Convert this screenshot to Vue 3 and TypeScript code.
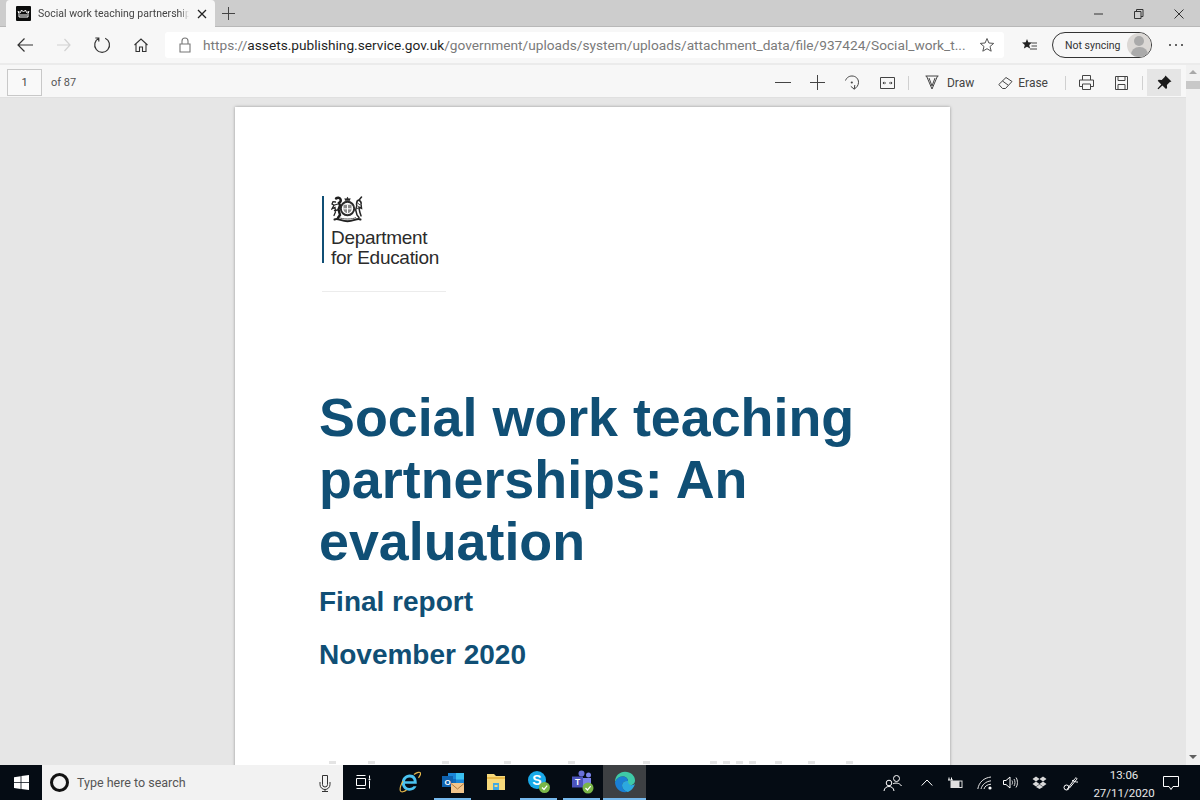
<template>
  <div class="screen">
    <header class="tabstrip">
      <div class="tab">
        <svg class="favicon" width="15" height="15" viewBox="0 0 15 15">
          <rect width="15" height="15" rx="1" fill="#0b0c0c" />
          <path d="M3 11V7.500L2 5.500l2.500 1L5.500 4 7.500 6 9.500 4l1 2.500 2.500-1L12 7.500V11Z" fill="none" stroke="#fff" stroke-width="1" />
          <path d="M4 9h7" stroke="#fff" stroke-width="1" />
        </svg>
        <span class="tab-title">Social work teaching partnership</span>
        <svg class="tab-close" width="10" height="10" viewBox="0 0 10 10">
          <path d="M1 1l8 8M9 1l-8 8" stroke="#222" stroke-width="1.300" />
        </svg>
      </div>
      <svg class="new-tab" width="13" height="13" viewBox="0 0 13 13">
        <path d="M6.500 0v13M0 6.500h13" stroke="#444" stroke-width="1" />
      </svg>
      <div class="window-controls">
        <svg width="12" height="12" viewBox="0 0 12 12"><path d="M1 6h9" stroke="#333" stroke-width="1" /></svg>
        <svg width="12" height="12" viewBox="0 0 12 12">
          <path d="M1.500 3.500h6.500v7H1.500zM3.500 3.500v-2h6.500v7H8" fill="none" stroke="#333" stroke-width="1" />
        </svg>
        <svg width="12" height="12" viewBox="0 0 12 12"><path d="M1.500 1.500l9 9M10.500 1.500l-9 9" stroke="#333" stroke-width="1" /></svg>
      </div>
    </header>

    <nav class="toolbar">
      <div class="nav-button">
        <svg width="18" height="16" viewBox="0 0 18 16"><path d="M17 8H2M8.500 1.500 2 8l6.500 6.500" fill="none" stroke="#333" stroke-width="1.200" /></svg>
      </div>
      <div class="nav-button">
        <svg width="18" height="16" viewBox="0 0 18 16"><path d="M2 8h13M9.500 2 15 8l-5.500 6" fill="none" stroke="#d2d2d2" stroke-width="1.200" /></svg>
      </div>
      <div class="nav-button">
        <svg width="18" height="18" viewBox="0 0 18 18"><path d="M6 2.200a7.400 7.400 0 1 0 6.200 0M5.800 5.500V2H2.300" fill="none" stroke="#333" stroke-width="1.200" /></svg>
      </div>
      <div class="nav-button">
        <svg width="16" height="16" viewBox="0 0 16 16"><path d="M1.500 8 8 2l6.500 6M3 7v7.500h3.500V10h3v4.500H13V7" fill="none" stroke="#333" stroke-width="1.100" /></svg>
      </div>
      <div class="address">
        <svg class="lock" width="12" height="16" viewBox="0 0 12 16">
          <path d="M1 7h10v8H1zM3 7V4a3 3 0 0 1 6 0v3" fill="none" stroke="#777" stroke-width="1.100" />
        </svg>
        <span class="url"><span class="url-dim">https://</span>assets.publishing.service.gov.uk<span class="url-dim">/government/uploads/system/uploads/attachment_data/file/937424/Social_work_t...</span></span>
        <svg class="star" width="16" height="16" viewBox="0 0 16 16">
          <path d="M8 1.500 9.900 6l4.800.4-3.700 3.100 1.200 4.700L8 11.700l-4.200 2.500L5 9.500 1.300 6.400 6.100 6Z" fill="none" stroke="#555" stroke-width="1" />
        </svg>
      </div>
      <svg class="collections" width="15" height="14" viewBox="0 0 15 14">
        <path d="M5 1 6.300 4.300 10 4.600 7.200 7l.9 3.600L5 8.700 1.900 10.600 2.800 7 0 4.600l3.700-.3Z" fill="#222" />
        <path d="M9.500 5H15M9.500 8H15M8 11h7" stroke="#444" stroke-width="1" />
      </svg>
      <div class="profile">
        <span>Not syncing</span>
        <span class="avatar"><span class="avatar-head"></span><span class="avatar-body"></span></span>
      </div>
      <div class="more"><i></i><i></i><i></i></div>
    </nav>

    <div class="workspace">
      <div class="viewer-column">
        <div class="pdfbar">
          <div class="page-box">1</div>
          <span class="page-count">of 87</span>
          <div class="pdf-tools">
            <svg class="t-minus" width="16" height="3" viewBox="0 0 16 3"><path d="M0 1.500h16" stroke="#444" stroke-width="1" /></svg>
            <svg class="t-plus" width="15" height="15" viewBox="0 0 15 15"><path d="M7.500 0v15M0 7.500h15" stroke="#444" stroke-width="1" /></svg>
            <svg class="t-rotate" width="16" height="16" viewBox="0 0 16 16">
              <path d="M1.500 5.500C3 2 5.500 1 8 1c3.800 0 6.500 2.800 6.500 6.300 0 2.900-1.700 5.300-4.300 6.700M6.800 11.300l3.400 2.900.6-4.200" fill="none" stroke="#444" stroke-width="1" />
              <circle cx="7.800" cy="7.500" r="1.100" fill="#444" />
            </svg>
            <svg class="t-fit" width="15" height="12" viewBox="0 0 15 12">
              <path d="M.5 .5h14v11H.5z" fill="none" stroke="#444" stroke-width="1" />
              <path d="M3 6h3M9 6h3M4 4.800 3 6l1 1.200M11 4.800 12 6l-1 1.200" fill="none" stroke="#444" stroke-width="1" />
            </svg>
            <i class="sep sep-a"></i>
            <div class="tool-label t-draw">
              <svg width="14" height="15" viewBox="0 0 14 15"><path d="M.5 1h13M1.500 1 7 14l5.500-13M4 3l3 8 3-8" fill="none" stroke="#444" stroke-width="1" /></svg>
              <span>Draw</span>
            </div>
            <div class="tool-label t-erase">
              <svg width="15" height="14" viewBox="0 0 15 14"><path d="M.8 8.500 8 1.500l6 4-6.500 7H4.500ZM4.500 5l5.500 4" fill="none" stroke="#444" stroke-width="1" /></svg>
              <span>Erase</span>
            </div>
            <i class="sep sep-b"></i>
            <svg class="t-print" width="15" height="15" viewBox="0 0 15 15">
              <path d="M3.500 5V.5h8V5M3.500 11.500H.5V5h14v6.500h-3M3.500 9h8v5.500h-8z" fill="none" stroke="#444" stroke-width="1" />
            </svg>
            <svg class="t-save" width="13" height="14" viewBox="0 0 13 14">
              <path d="M.5 .5h12v13H.5zM3 .5v4h7v-4M3 13.500V8.500h7v5" fill="none" stroke="#444" stroke-width="1" />
            </svg>
            <i class="sep sep-c"></i>
            <div class="pin-button">
              <svg width="16" height="16" viewBox="0 0 16 16">
                <path d="M9.500 .5 15.500 6.500l-1.600.6-3 3 .2 3-1.100 1-3.600-3.600-4 3.800-.9-.9 3.800-4L1.700 5.800l1-1.100 3 .2 3-3Z" fill="#1a1a1a" />
              </svg>
            </div>
          </div>
        </div>

        <main class="viewer">
          <article class="sheet">
            <div class="brand">
              <i class="brand-bar"></i>
              <div class="brand-body">
                <svg class="crest" width="33" height="28" viewBox="0 0 33 28">
                  <!-- crown -->
                  <path d="M14 4.800 13.500 2l1.700.8L16.500 .8l1.300 2 1.700-.8-.5 2.800Z" fill="#2a2a2a" />
                  <!-- garter ring and shield -->
                  <circle cx="16.500" cy="12.500" r="6.700" fill="none" stroke="#2b2b2b" stroke-width="2" />
                  <path d="M12.500 8.800h8v4.500c0 2.200-2 3.500-4 4.200-2-.7-4-2-4-4.200Z" fill="#8a8a8a" />
                  <path d="M16.500 8.800v8.700M12.500 12.800h8" stroke="#fff" stroke-width="1" />
                  <!-- lion -->
                  <path d="M5 2.500c1.500-1.300 3.700-1 4.500.7.700 1.700-.3 3-1.500 3.600L9 9.500l-1.500 3.800L9 19l-2 2.800" fill="none" stroke="#1d1d1d" stroke-width="2.400" stroke-linecap="round" />
                  <path d="M4.500 6 2 5.700 1 8l2 1.300L1 12.800l3-1.300.5 4.500-1.500 3.500M7 8 3.500 9M6.500 14l-3 .6" fill="none" stroke="#222" stroke-width="1.300" stroke-linecap="round" />
                  <!-- unicorn -->
                  <path d="M30.500 1 27.700 4.500M27.500 4c1.700.7 2.700 2 2.700 3.500M26.500 4.500c-1 1.700-1.200 3.500-.7 5.300L24.700 14l1.300 5 2 2.500M30 8l.5 4.300-2.500-1 .7 4.500 1.300 4" fill="none" stroke="#262626" stroke-width="1.500" stroke-linecap="round" />
                  <path d="M26 6.500 29 9M25.500 12l3.300 1.200" fill="none" stroke="#444" stroke-width="1" />
                  <!-- motto scroll -->
                  <path d="M3.500 23.500c3.500-1.700 6.500 1.700 13 1.700s9.500-3.400 13-1.700" fill="none" stroke="#222" stroke-width="2" stroke-linecap="round" />
                  <path d="M8 21.500c2 1 4.500 1.500 8.500 1.500s6.500-.5 8.500-1.500" fill="none" stroke="#555" stroke-width="1" />
                </svg>
                <p class="brand-name">Department<br />for Education</p>
              </div>
            </div>
            <hr class="rule" />
            <h1 class="title">Social work teaching partnerships: An evaluation</h1>
            <h2 class="subtitle">Final report</h2>
            <h2 class="date">November 2020</h2>
            <svg class="cut-line" width="560" height="3" viewBox="0 0 560 3">
              <rect v-for="x in cutMarks" :key="x" :x="x" y="0" width="7" height="3" fill="#e4e4e4" />
            </svg>
          </article>
        </main>
      </div>

      <aside class="scrollbar">
        <svg width="14" height="16" viewBox="0 0 14 16"><path d="M7 5l4 4H3Z" fill="#a8a8a8" /></svg>
        <i class="thumb"></i>
        <svg class="scroll-down" width="14" height="16" viewBox="0 0 14 16"><path d="M3 6h8l-4 4Z" fill="#606060" /></svg>
      </aside>
    </div>

    <footer class="taskbar">
      <div class="start">
        <svg width="15" height="15" viewBox="0 0 15 15">
          <path d="M0 2.200 6.600 1.200v6H0ZM7.400 1.100 15 0v7.200H7.400ZM0 8h6.600v6L0 13ZM7.400 8H15v7l-7.600-1.100Z" fill="#fff" />
        </svg>
      </div>
      <div class="search">
        <i class="cortana"></i>
        <span class="search-text">Type here to search</span>
        <svg class="mic" width="12" height="18" viewBox="0 0 12 18">
          <path d="M3.500 1.500h5v9a2.500 2.500 0 0 1-5 0ZM1 8v2.500a5 5 0 0 0 10 0V8M6 15.500V17.500M3 17.500h6" fill="none" stroke="#333" stroke-width="1" />
        </svg>
      </div>

      <div class="slot task-view">
        <svg width="16" height="14" viewBox="0 0 16 14">
          <path d="M.5 .5h9M.5 13.500h9M.5 3.500h9v7h-9zM13.500 .5v3M13.500 6v7.500" fill="none" stroke="#fff" stroke-width="1" />
          <circle cx="13.500" cy="4.500" r="1" fill="#fff" />
        </svg>
      </div>
      <div class="slot">
        <svg width="22" height="22" viewBox="0 0 22 22">
          <path d="M17.800 12.800h-12c.3 2.600 2 4.200 4.800 4.200 1.700 0 3-.6 3.800-1.700h3.100C16.400 18 14 19.700 10.500 19.700 6 19.700 2.800 16.500 2.800 11.800S6.200 3.500 10.700 3.500c4.700 0 7.300 3.300 7.100 9.300ZM5.900 10.300h8.900c-.2-2.400-1.700-3.900-4.200-3.900s-4.300 1.500-4.700 3.900Z" fill="#4bc4f2" />
          <path d="M15 3.500C18 1 21 .8 21.500 2c.4 1.200-.6 3-2 4.800M4 10C1.800 14 .5 18 1.500 20c.8 1.300 3.500 1 6-1" fill="none" stroke="#e5b84a" stroke-width="1.200" />
        </svg>
      </div>
      <div class="slot running">
        <svg width="24" height="24" viewBox="0 0 24 24">
          <rect x="7" y="3" width="16" height="13" fill="#1a86d8" />
          <rect x="15" y="3" width="8" height="6.500" fill="#3bc0f0" />
          <rect x="7" y="9" width="8" height="7" fill="#0f6cbd" />
          <rect x="1" y="6" width="11" height="11" fill="#0f62ae" />
          <text x="6.500" y="15" text-anchor="middle" font-size="8" font-weight="700" font-family="Liberation Sans, sans-serif" fill="#fff">O</text>
          <rect x="10" y="13" width="13" height="10" fill="#f3c58c" />
          <path d="M10 13.500 16.500 19 23 13.500" fill="none" stroke="#b17c3e" stroke-width="1" />
        </svg>
      </div>
      <div class="slot">
        <svg width="20" height="18" viewBox="0 0 20 18">
          <path d="M1 1h7l2 2h9v14H1Z" fill="#f7d97b" />
          <path d="M1 4h18v2H1Z" fill="#e9b949" />
          <path d="M7 10h6v7H7Z" fill="#3fa9e6" />
          <path d="M8.500 12h3v2h-3Z" fill="#f7d97b" />
        </svg>
      </div>
      <div class="slot running">
        <svg width="24" height="24" viewBox="0 0 24 24">
          <circle cx="10" cy="10" r="9" fill="#19a9e8" />
          <text x="10" y="15" text-anchor="middle" font-size="14" font-weight="700" font-family="Liberation Sans, sans-serif" fill="#fff">S</text>
          <circle cx="17.500" cy="17.500" r="5.500" fill="#7ab648" />
          <path d="M15 17.500l2 2 3.200-3.800" fill="none" stroke="#fff" stroke-width="1.200" />
        </svg>
      </div>
      <div class="slot running">
        <svg width="24" height="24" viewBox="0 0 24 24">
          <circle cx="18.500" cy="5" r="2.500" fill="#7b83eb" />
          <circle cx="11.500" cy="3.500" r="3" fill="#6a70d8" />
          <path d="M13 8h8v6c0 2-1.500 3-4 3h-4Z" fill="#7b83eb" />
          <rect x="2" y="6.500" width="11" height="11" fill="#4b53bc" />
          <text x="7.500" y="15" text-anchor="middle" font-size="8.500" font-weight="700" font-family="Liberation Sans, sans-serif" fill="#fff">T</text>
          <circle cx="18" cy="18" r="5.500" fill="#7ab648" />
          <path d="M15.500 18l2 2 3.200-3.800" fill="none" stroke="#fff" stroke-width="1.200" />
        </svg>
      </div>
      <div class="slot active">
        <svg width="22" height="22" viewBox="0 0 22 22">
          <path d="M1 11C1 5 5.500 .8 11 .8c5.800 0 10 4 10 8.700 0 3-2.400 4.700-5 4.700-1.700 0-3-.6-3.500-1.400 1-.7 1.500-1.700 1.500-2.800 0-2.500-2.300-4.500-5.300-4.500S3 7 1 11Z" fill="#3ec9a7" />
          <path d="M1 11c1.800-3.500 4-5.500 7.700-5.500 3 0 5.300 2 5.300 4.500-3.700-.5-6 1.500-6 4.500 0 2.600 2 5 5.500 6.500C12 21 11.500 21.200 11 21.200 5.500 21.200 1 16.800 1 11Z" fill="#1a7fd4" />
          <path d="M21 12.500c-1 4.500-4.500 8-7.500 8.500-3.500-1.500-5.500-3.900-5.500-6.500 0-3 2.300-5 6-4.500 0 1.500 1 4.200 3.500 4.200 1.500 0 3-.7 3.500-1.700Z" fill="#2ca9e0" />
        </svg>
      </div>

      <div class="tray">
        <svg class="i-people" width="20" height="18" viewBox="0 0 20 18">
          <circle cx="6" cy="9" r="2.800" fill="none" stroke="#fff" stroke-width="1" />
          <path d="M1 17c.3-3 2.500-4.500 5-4.500S10.700 14 11 17" fill="none" stroke="#fff" stroke-width="1" />
          <circle cx="13.500" cy="4.500" r="3" fill="none" stroke="#fff" stroke-width="1" />
          <path d="M10 9.800c2-1.200 6.500-1.200 8.500 2.200" fill="none" stroke="#fff" stroke-width="1" />
        </svg>
        <svg class="i-chevron" width="12" height="7" viewBox="0 0 12 7"><path d="M.7 6.500 6 1l5.300 5.500" fill="none" stroke="#fff" stroke-width="1" /></svg>
        <svg class="i-battery" width="15" height="12" viewBox="0 0 15 12">
          <path d="M1 .5V3M3.500 .5V3M0 3h5" stroke="#fff" stroke-width="1" />
          <rect x="2.500" y="3.500" width="12" height="7.500" fill="#e0e0e0" />
          <path d="M11.500 4.500h2v5.500h-2z" fill="#050c14" />
        </svg>
        <svg class="i-wifi" width="16" height="14" viewBox="0 0 16 14">
          <path d="M.8 13C2 6 7 1.800 14 1M4 13C5 9 8.500 5.500 14 4.800M7 13c.6-2.500 3-4.500 7-4.800" fill="none" stroke="#e6e6e6" stroke-width="1" />
          <circle cx="13" cy="12" r="1.600" fill="#fff" />
        </svg>
        <svg class="i-volume" width="15" height="13" viewBox="0 0 15 13">
          <path d="M.5 4.500H3L7 1v11L3 8.500H.5Z" fill="none" stroke="#fff" stroke-width="1" />
          <path d="M9 4.500c.7 1.200.7 2.800 0 4M11 3c1.300 2 1.300 5 0 7M13 1.500c2 3 2 7 0 10" fill="none" stroke="#ddd" stroke-width="1" />
        </svg>
        <svg class="i-dropbox" width="15" height="13" viewBox="0 0 15 13">
          <path d="M4 .5.500 3 4 5.500 7.500 3ZM11 .5 7.500 3 11 5.500 14.500 3ZM4 5.500.5 8 4 10.500 7.500 8ZM11 5.500 7.500 8l3.500 2.500L14.500 8ZM4 11l3.500 2 3.500-2-3.500-2.500Z" fill="#d9d9d9" />
        </svg>
        <svg class="i-pen" width="16" height="16" viewBox="0 0 16 16">
          <circle cx="3.500" cy="12.500" r="2.500" fill="none" stroke="#fff" stroke-width="1" />
          <path d="M4 14.500 12 3.500c.9-1.200 2.200-.6 1.800.7L6.500 13M9 5.500c2 .5 4.500 2 6 1.500" fill="none" stroke="#fff" stroke-width="1" />
        </svg>
        <div class="clock">
          <span>13:06</span>
          <span>27/11/2020</span>
        </div>
        <svg class="i-action" width="16" height="16" viewBox="0 0 16 16">
          <path d="M.5 1.500h15v10h-5.500l-2 3-2-3H.5Z" fill="none" stroke="#fff" stroke-width="1" />
        </svg>
      </div>
    </footer>
  </div>
</template>

<script setup lang="ts">
// tops of the next (cut off) line of the pdf page, measured from the text's left edge
const cutMarks: number[] = [10, 49, 123, 185, 249, 324, 391, 404, 417, 430, 456, 489, 527]
</script>

<style>
html, body { margin: 0; background: #e6e6e6; }
</style>

<style scoped>
.screen {
  width: 1200px;
  height: 800px;
  display: flex;
  flex-direction: column;
  overflow: hidden;
  font-family: Roboto, "Open Sans", sans-serif;
  color: #333;
}

.tabstrip {
  height: 27px;
  flex: none;
  display: flex;
  align-items: center;
  background: #cdcdcd;
  box-shadow: inset 0 -1px 0 #b8b8b8;
  padding-left: 6px;
  box-sizing: border-box;
}
.tab {
  width: 209px;
  height: 27px;
  box-sizing: border-box;
  padding: 0 0 0 10px;
  background: #f7f7f7;
  border-radius: 4px 4px 0 0;
  display: flex;
  align-items: center;
}
.favicon { flex: none; margin-right: 7px; }
.tab-title {
  width: 151px;
  font-size: 10.500px;
  white-space: nowrap;
  color: #444;
  flex: none;
  -webkit-mask-image: linear-gradient(90deg, #000 94%, transparent);
  mask-image: linear-gradient(90deg, #000 94%, transparent);
}
.tab-close { flex: none; margin-left: 8px; }
.new-tab { margin-left: 7px; }
.window-controls {
  margin-left: auto;
  display: flex;
  gap: 28px;
  padding-right: 15px;
}

.toolbar {
  height: 38px;
  flex: none;
  display: flex;
  align-items: center;
  background: #f7f7f7;
  padding-left: 6px;
  box-sizing: border-box;
  border-bottom: 2px solid #ebebeb;
}
.nav-button {
  width: 38.500px;
  display: flex;
  justify-content: center;
}
.address {
  width: 839px;
  height: 26px;
  background: #fff;
  border-radius: 3px;
  margin-left: 5px;
  display: flex;
  align-items: center;
  box-sizing: border-box;
  padding-left: 14px;
  flex: none;
}
.lock { flex: none; }
.url {
  margin-left: 12px;
  width: 763px;
  font-size: 13.700px;
  white-space: nowrap;
  color: #1f1f1f;
  flex: none;
}
.url-dim { color: #7a7a7a; }
.star { flex: none; margin-left: 13px; }
.collections { margin-left: 18px; flex: none; }
.profile {
  width: 100px;
  height: 26px;
  margin-left: 15px;
  box-sizing: border-box;
  border: 1px solid #333;
  border-radius: 13px;
  display: flex;
  align-items: center;
  justify-content: space-between;
  padding: 0 0 0 12px;
  font-size: 10.500px;
  color: #333;
  flex: none;
}
.avatar {
  width: 24px;
  height: 24px;
  border-radius: 50%;
  background: #dbd8d5;
  display: flex;
  flex-direction: column;
  align-items: center;
  overflow: hidden;
}
.avatar-head {
  width: 10px;
  height: 10px;
  margin-top: 3px;
  background: #aaa;
  border-radius: 50%;
}
.avatar-body {
  width: 17px;
  height: 10px;
  margin-top: 1px;
  background: #aaa;
  border-radius: 8px 8px 0 0;
}
.more {
  margin-left: 17px;
  display: flex;
  gap: 4px;
}
.more i {
  width: 2px;
  height: 2px;
  background: #333;
  border-radius: 50%;
}

.workspace {
  flex: 1;
  min-height: 0;
  display: flex;
}
.viewer-column {
  flex: 1;
  min-width: 0;
  display: flex;
  flex-direction: column;
}
.pdfbar {
  height: 29px;
  padding-top: 3px;
  flex: none;
  display: flex;
  align-items: center;
  background: #f7f7f7;
  padding-left: 7px;
  box-sizing: content-box;
}
.page-box {
  width: 35px;
  height: 27px;
  box-sizing: border-box;
  border: 1px solid #c8c8c8;
  background: #f9f9f9;
  font-size: 11px;
  display: flex;
  align-items: center;
  justify-content: center;
  color: #444;
}
.page-count {
  margin-left: 9px;
  font-size: 11px;
  color: #555;
}
.pdf-tools {
  margin-left: auto;
  display: flex;
  align-items: center;
  height: 100%;
}
.t-minus { margin-right: 19px; }
.t-plus { margin-right: 19px; }
.t-rotate { margin-right: 20px; }
.t-fit { margin-right: 13px; }
.sep {
  width: 1px;
  height: 14px;
  background: #d0d0d0;
}
.sep-a { margin-right: 16px; }
.tool-label {
  display: flex;
  align-items: center;
  gap: 8px;
  font-size: 12px;
  color: #444;
}
.t-draw { margin-right: 24px; }
.t-erase { gap: 5px; margin-right: 17px; }
.sep-b { margin-right: 13px; }
.t-print { margin-right: 21px; }
.t-save { margin-right: 14px; }
.sep-c { margin-right: 4px; }
.pin-button {
  width: 34px;
  height: 27px;
  background: #e5e5e5;
  display: flex;
  align-items: center;
  justify-content: center;
  margin-right: 5px;
}

.viewer {
  flex: 1;
  min-height: 0;
  background: #e6e6e6;
  border-top: 1px solid #e0e0e0;
  display: flex;
  justify-content: center;
  padding: 9px 1px 0 0;
  overflow: hidden;
}
.sheet {
  width: 715px;
  flex: none;
  height: 720px;
  background: #fff;
  box-shadow: 0 0 3px rgba(0, 0, 0, 0.35);
  box-sizing: border-box;
  padding: 89px 0 0 84px;
  font-family: "Liberation Sans", Arial, sans-serif;
}
.brand {
  display: flex;
  padding-left: 3px;
}
.brand-bar {
  width: 2px;
  height: 67px;
  background: #104f75;
  flex: none;
}
.brand-body {
  margin-left: 7px;
}
.crest {
  display: block;
}
.brand-name {
  margin: 4px 0 0;
  font-size: 19px;
  line-height: 20px;
  letter-spacing: -0.3px;
  color: #2b2b2b;
}
.rule {
  width: 124px;
  height: 1px;
  margin: 23px 0 0 3px;
  border: 0;
  background: #ececec;
}
.title {
  margin: 94px 0 0;
  width: 560px;
  font-size: 53.800px;
  line-height: 62px;
  font-weight: 700;
  color: #104f75;
}
.subtitle,
.date {
  margin: 0;
  font-size: 28px;
  font-weight: 700;
  color: #104f75;
}
.subtitle { margin-top: 12px; line-height: 36px; }
.date { margin-top: 17px; line-height: 36px; }
.cut-line {
  display: block;
  margin-top: 88px;
}

.scrollbar {
  width: 14px;
  flex: none;
  background: #f1f1f1;
  display: flex;
  flex-direction: column;
  align-items: center;
}
.thumb {
  width: 14px;
  height: 8px;
  background: #c8c8c8;
  flex: none;
}
.scroll-down { margin-top: auto; margin-bottom: 0; }

.taskbar {
  height: 35px;
  flex: none;
  display: flex;
  background: #050c14;
}
.start {
  width: 42px;
  display: flex;
  align-items: center;
  justify-content: center;
  flex: none;
}
.search {
  width: 301px;
  flex: none;
  background: #f2f2f2;
  display: flex;
  align-items: center;
  padding: 0 12px 0 8px;
  box-sizing: border-box;
}
.cortana {
  width: 13px;
  height: 13px;
  border: 3px solid #111;
  border-radius: 50%;
  flex: none;
}
.search-text {
  margin-left: 8px;
  font-size: 12.500px;
  color: #555;
}
.mic { margin-left: auto; }
.slot {
  width: 43px;
  flex: none;
  display: flex;
  align-items: center;
  justify-content: center;
  box-sizing: border-box;
  border-bottom: 2px solid transparent;
}
.task-view { width: 45px; padding-right: 3px; }
.running {
  border-image: linear-gradient(90deg, transparent 10%, #76b9ed 10%, #76b9ed 90%, transparent 90%) 1;
}
.active {
  background: #3d4043;
  border-bottom-color: #76b9ed;
}
.tray {
  margin-left: auto;
  display: flex;
  align-items: center;
  color: #e8e8e8;
}
.i-people { margin-right: 18px; }
.i-chevron { margin-right: 14.500px; }
.i-battery { margin-right: 14.500px; }
.i-wifi { margin-right: 9.500px; }
.i-volume { margin-right: 14px; }
.i-dropbox { margin-right: 16.500px; }
.i-pen { margin-right: 17px; }
.clock {
  width: 56px;
  padding-top: 2px;
  display: flex;
  flex-direction: column;
  align-items: center;
  font-size: 11.500px;
  line-height: 18px;
  white-space: nowrap;
}
.i-action { margin: 0 21px 0 11px; }
</style>
